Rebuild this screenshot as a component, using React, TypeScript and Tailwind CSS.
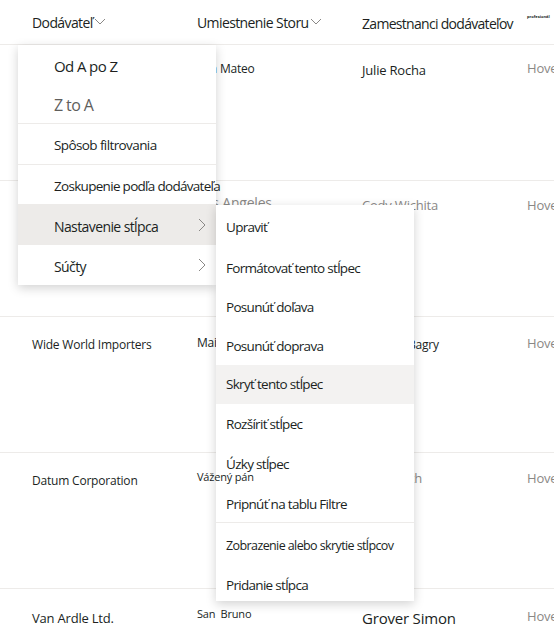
import React from "react";

const Chevron = () => (
  <svg width="12" height="8" viewBox="0 0 12 8" className="ml-[1px] inline-block">
    <path d="M1 1 L6 6 L11 1" fill="none" stroke="#8a8886" strokeWidth="1" />
  </svg>
);

const Right = () => (
  <svg width="8" height="14" viewBox="0 0 8 14">
    <path d="M1 1 L7 7 L1 13" fill="none" stroke="#8a8886" strokeWidth="1" />
  </svg>
);

type Cell = { text: string; cls?: string };
type Row = { pt: string; cells: Cell[] };

const rows: Row[] = [
  {
    pt: "pt-[15px]",
    cells: [
      { text: "" },
      { text: "San Mateo", cls: "text-[12px] -mt-[1px]" },
      { text: "Julie Rocha", cls: "text-[13px]" },
      { text: "Hove", cls: "text-[13px] text-[#8a8886] -mt-[2px]" },
    ],
  },
  {
    pt: "pt-[15px]",
    cells: [
      { text: "" },
      { text: "Los Angeles", cls: "text-[14px] text-[#8a8886] -mt-[3px]" },
      { text: "Cody Wichita", cls: "text-[13px] text-[#8a8886] -mt-[1px]" },
      { text: "Hove", cls: "text-[13px] text-[#8a8886] -mt-[1px]" },
    ],
  },
  {
    pt: "pt-[18px]",
    cells: [
      { text: "Wide World Importers", cls: "text-[12px]" },
      { text: "Main", cls: "text-[12px] -mt-[2px]" },
      { text: "Richard Bagry", cls: "text-[12px] pl-[2px]" },
      { text: "Hove", cls: "text-[13px] text-[#8a8886] -mt-[2px]" },
    ],
  },
  {
    pt: "pt-[18px]",
    cells: [
      { text: "Datum Corporation", cls: "text-[12px]" },
      { text: "Vážený pán", cls: "text-[11px] -mt-[4px] relative z-20" },
      { text: "Kim Smith", cls: "text-[13px] text-[#8a8886] -mt-[3px]" },
      { text: "Hove", cls: "text-[13px] text-[#8a8886] -mt-[3px]" },
    ],
  },
  {
    pt: "pt-[18px]",
    cells: [
      { text: "Van Ardle Ltd.", cls: "text-[13px] mt-[1px]" },
      { text: "San  Bruno", cls: "text-[11px] -mt-[3px] whitespace-pre" },
      { text: "Grover Simon", cls: "text-[15px] mt-[1px]" },
      { text: "Hove", cls: "text-[13px] text-[#8a8886] -mt-[1px]" },
    ],
  },
];

const MenuItem = ({
  label,
  cls = "",
  hl = "",
  chevron = false,
  px = "pl-[36px]",
  h = "h-[40px]",
}: {
  label: string;
  cls?: string;
  hl?: string;
  chevron?: boolean;
  px?: string;
  h?: string;
}) => (
  <div className={`flex items-center justify-between ${h} ${px} pr-[10px] ${hl}`}>
    <span className={`whitespace-nowrap text-[#201f1e] ${cls}`}>{label}</span>
    {chevron && <Right />}
  </div>
);

const sub = "text-[13.5px] tracking-[-0.7px]";

export default function App() {
  return (
    <div
      className="relative w-[554px] h-[631px] overflow-hidden bg-white text-[#201f1e]"
      style={{ fontFamily: '"Open Sans", "Noto Sans", sans-serif' }}
    >
      {/* header */}
      <div className="grid grid-cols-[165px_165px_165px_165px] pl-[32px] h-[45px] border-b border-[#edebe9] items-center">
        <div className="flex items-center text-[14px] tracking-[-0.6px]">
          Dodávateľ
          <Chevron />
        </div>
        <div className="flex items-center text-[14px] tracking-[-0.6px]">
          Umiestnenie Storu
          <Chevron />
        </div>
        <div className="text-[14px] tracking-[-0.7px] pt-[3px] whitespace-nowrap">Zamestnanci dodávateľov</div>
        <div className="text-[4px] font-bold -mt-[10px]">profesionál</div>
      </div>
      {rows.map((r, i) => (
        <div
          key={i}
          className={`grid grid-cols-[165px_165px_165px_165px] pl-[32px] h-[136px] border-b border-[#edebe9] ${r.pt}`}
        >
          {r.cells.map((c, j) => (
            <div key={j} className={`whitespace-nowrap leading-[20px] tracking-[-0.2px] ${c.cls ?? ""}`}>
              {c.text}
            </div>
          ))}
        </div>
      ))}

      {/* main menu */}
      <div className="absolute left-[18px] top-[45px] w-[198px] bg-white shadow-[0_3px_10px_rgba(0,0,0,0.18)] tracking-[-0.6px]">
        <MenuItem label="Od A po Z" cls="text-[15px] pt-[1px]" h="h-[42px]" />
        <MenuItem label="Z to A" cls="text-[16px] !text-[#605e5c]" h="h-[36px]" />
        <div className="h-px bg-[#edebe9]" />
        <MenuItem label="Spôsob filtrovania" cls="text-[13.5px] pt-[3px]" h="h-[40px]" />
        <div className="h-px bg-[#edebe9]" />
        <MenuItem label="Zoskupenie podľa dodávateľa" cls={`${sub} pt-[3px]`} h="h-[39px]" />
        <MenuItem label="Nastavenie stĺpca" cls="text-[14px] pt-[3px]" hl="bg-[#edebe9]" chevron h="h-[41px]" />
        <MenuItem label="Súčty" cls="text-[14px] pt-[3px]" chevron h="h-[40px]" />
      </div>

      {/* submenu */}
      <div className="absolute left-[216px] top-[205px] w-[198px] bg-white shadow-[0_3px_10px_rgba(0,0,0,0.18)]">
        <MenuItem label="Upraviť" cls={sub} px="pl-[10px]" h="h-[44px]" />
        <MenuItem label="Formátovať tento stĺpec" cls={sub} px="pl-[10px]" h="h-[38px]" />
        <MenuItem label="Posunúť doľava" cls={sub} px="pl-[10px]" h="h-[40px]" />
        <MenuItem label="Posunúť doprava" cls={sub} px="pl-[10px]" h="h-[38px]" />
        <MenuItem label="Skryť tento stĺpec" cls={sub} px="pl-[10px]" hl="bg-[#f3f2f1]" h="h-[39px]" />
        <MenuItem label="Rozšíriť stĺpec" cls={sub} px="pl-[10px]" h="h-[41px]" />
        <MenuItem label="Úzky stĺpec" cls={sub} px="pl-[10px]" h="h-[39px]" />
        <MenuItem label="Pripnúť na tablu Filtre" cls={`${sub} pt-[3px]`} px="pl-[10px]" h="h-[38px]" />
        <div className="h-px bg-[#edebe9]" />
        <MenuItem label="Zobrazenie alebo skrytie stĺpcov" cls="text-[12.5px] tracking-[-0.6px]" px="pl-[10px]" h="h-[46px]" />
        <MenuItem label="Pridanie stĺpca" cls={sub} px="pl-[10px]" h="h-[32px]" />
      </div>
    </div>
  );
}
